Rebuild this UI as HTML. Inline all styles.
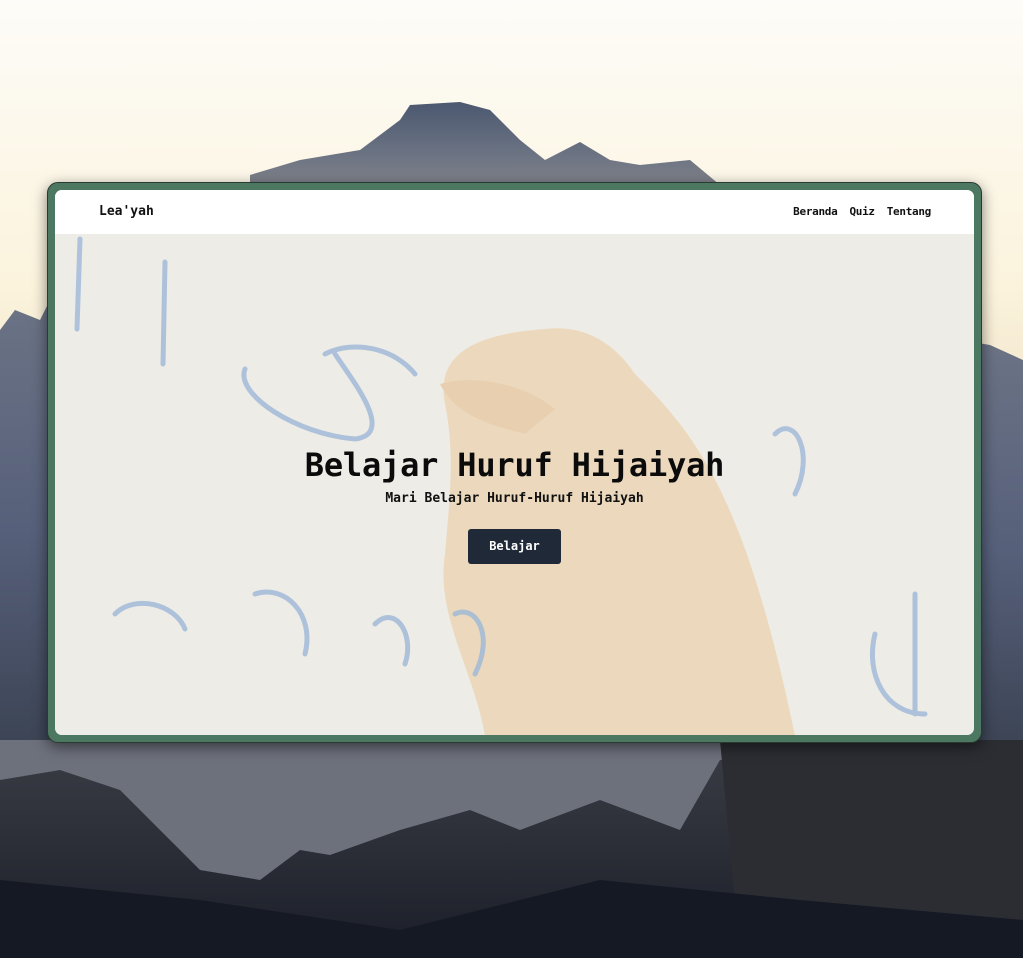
<!DOCTYPE html>
<html><head><meta charset="utf-8"><style>
*{margin:0;padding:0;box-sizing:border-box}
body{width:1023px;height:958px;overflow:hidden;position:relative;font-family:"DejaVu Sans Mono","Liberation Mono",monospace;background:#fbf6ea}
.bg{position:absolute;inset:0}
.card{position:absolute;left:47px;top:182px;width:935px;height:561px;background:#4c7862;border:1.5px solid #2a3a30;border-radius:11px;box-shadow:0 4px 14px rgba(0,0,0,.5)}
.inner{position:absolute;left:7px;top:7px;right:7px;bottom:7px;border-radius:7px;overflow:hidden;background:#eeece6}
nav{position:absolute;left:0;top:0;width:100%;height:44px;background:#fff;z-index:2}
.logo{position:absolute;left:44px;top:14px;font-size:13px;font-weight:bold;color:#111}
.links{position:absolute;right:43px;top:15px;font-size:11px;font-weight:bold;color:#111;letter-spacing:-0.3px}
.links span{margin-left:12px}
.hero{position:absolute;left:0;top:44px;width:100%;height:502px}
h1{position:absolute;left:0;width:100%;top:212px;text-align:center;font-size:32px;font-weight:bold;color:#0b0b0b;letter-spacing:-0.2px}
p.sub{position:absolute;left:0;width:100%;top:257px;text-align:center;font-size:13px;font-weight:bold;color:#111}
.btn{position:absolute;left:413px;top:295px;width:93px;height:35px;background:#1f2937;border-radius:3px;color:#fff;font-size:12px;font-weight:bold;text-align:center;line-height:35px}
</style></head><body>
<svg class="bg" width="1023" height="958" viewBox="0 0 1023 958">
<defs>
<linearGradient id="sky" x1="0" y1="0" x2="0" y2="1"><stop offset="0" stop-color="#fdfcf8"/><stop offset=".3" stop-color="#fbf3dc"/><stop offset=".4" stop-color="#f4e8d0"/></linearGradient>
<linearGradient id="m1" x1="0" y1="0" x2="0" y2="1"><stop offset="0" stop-color="#4b5870"/><stop offset=".6" stop-color="#6a7282"/><stop offset="1" stop-color="#7f8189"/></linearGradient>
<linearGradient id="side" x1="0" y1="0" x2="0" y2="1"><stop offset="0" stop-color="#6b7385"/><stop offset=".5" stop-color="#56607a"/><stop offset="1" stop-color="#3a4252"/></linearGradient>
<linearGradient id="m2" x1="0" y1="0" x2="0" y2="1"><stop offset="0" stop-color="#3a3c44"/><stop offset="1" stop-color="#1a1e28"/></linearGradient>
</defs>
<rect width="1023" height="958" fill="url(#sky)"/>
<path d="M0 330 L15 310 L40 320 L50 300 L60 330 L60 760 L0 760Z" fill="url(#side)"/>
<path d="M250 175 L300 160 L360 150 L400 120 L410 105 L460 102 L490 110 L520 140 L545 160 L580 142 L610 160 L640 165 L690 160 L720 185 L250 185Z" fill="url(#m1)"/>
<path d="M960 340 L990 345 L1023 360 L1023 760 L960 760Z" fill="url(#side)"/>
<path d="M0 740 L1023 740 L1023 958 L0 958Z" fill="#6d717c"/>
<path d="M0 780 L60 770 L120 790 L200 870 L260 880 L300 850 L330 855 L400 830 L470 810 L520 830 L600 800 L680 830 L720 760 L1023 750 L1023 958 L0 958Z" fill="url(#m2)"/>
<path d="M720 740 L1023 740 L1023 958 L740 958Z" fill="#2b2d33"/>
<path d="M0 880 L200 900 L400 930 L600 880 L800 900 L1023 920 L1023 958 L0 958Z" fill="#141923"/>
</svg>
<div class="card"><div class="inner">
<nav><div class="logo">Lea'yah</div><div class="links"><span>Beranda</span><span>Quiz</span><span>Tentang</span></div></nav>
<div class="hero">
<svg width="919" height="502" style="position:absolute;left:0;top:0">
<rect width="919" height="502" fill="#eeece6"/>
<path d="M390 170 C380 120 420 100 490 95 C530 90 560 110 580 140 C640 200 690 260 740 502 L430 502 C420 440 380 380 390 320 C395 260 400 220 390 170Z" fill="#ecd9bd"/>
<path d="M385 150 C420 140 470 150 500 175 L470 200 C430 190 400 180 385 150Z" fill="#e8cfb0"/>
<g fill="none" stroke="#9db8d8" stroke-width="5" stroke-linecap="round" opacity=".8">
<path d="M25 5 L22 95"/><path d="M110 28 L108 130"/>
<path d="M190 135 C180 160 240 200 300 205 C340 200 300 150 280 120"/>
<path d="M270 120 C300 105 340 115 360 140"/>
<path d="M60 380 C80 360 120 370 130 395"/><path d="M200 360 C230 350 260 380 250 420"/>
<path d="M320 390 C340 370 360 400 350 430"/><path d="M400 380 C420 370 440 400 420 440"/>
<path d="M720 200 C740 180 760 220 740 260"/><path d="M860 360 L860 480"/><path d="M820 400 C810 440 830 480 870 480"/>
</g>
</svg>
<h1>Belajar Huruf Hijaiyah</h1>
<p class="sub">Mari Belajar Huruf-Huruf Hijaiyah</p>
<div class="btn">Belajar</div>
</div>
</div></div>
</body></html>
